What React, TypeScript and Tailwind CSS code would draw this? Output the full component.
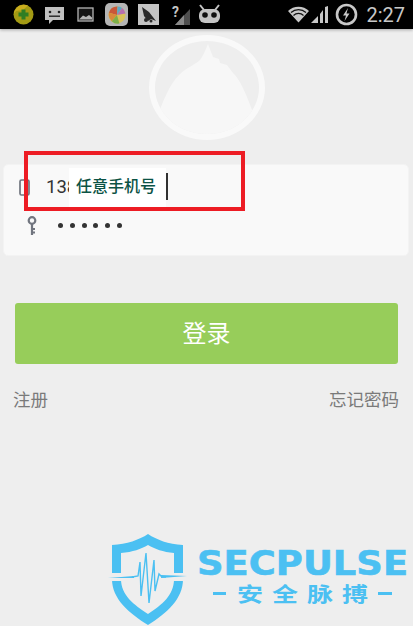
const CJK = "font-['Roboto','Noto_Sans_CJK_SC',sans-serif]";

function StatusBar() {
    return (
        <div className="relative z-10 h-[29px] bg-black flex items-center pl-[13px] pr-[8px] shrink-0 shadow-[0_1px_3px_rgba(0,0,0,0.3)]">
            {/* 360 ball */}
            <svg width="21" height="21" viewBox="0 0 21 21">
                <circle cx="10.500" cy="10.500" r="10" fill="#a39a14" />
                <path d="M1 10a10 10 0 0 1 14-8.500L10 6 3 7z" fill="#c9ad1e" />
                <path d="M8.500 5.500h4v3h3v4h-3v3h-4v-3h-3v-4h3z" fill="#2f7d23" />
            </svg>
            {/* message */}
            <svg width="21" height="22" viewBox="0 0 21 22" className="ml-[10px]">
                <path d="M1 3h19v13H9l-4 4v-4H1z" fill="#c0c0c0" />
                <circle cx="6" cy="8" r="1.300" fill="#222" />
                <circle cx="15" cy="8" r="1.300" fill="#222" />
                <path d="M5 11.500h11v1.400H5z" fill="#222" />
            </svg>
            {/* picture */}
            <svg width="17" height="15" viewBox="0 0 17 15" className="ml-[12px]">
                <rect x="1" y="1" width="15" height="13" fill="#151515" stroke="#b5b5b5" strokeWidth="1.300" />
                <path d="M2 12.500l4-4 3 1.500 3-2 3 2.500v2z" fill="#b5b5b5" />
            </svg>
            {/* ball app */}
            <div className="ml-[11px] w-[23px] h-[23px] rounded-[5px] bg-[#b5b5b5] flex items-center justify-center">
                <svg width="18" height="18" viewBox="0 0 19 19">
                    <circle cx="9.500" cy="9.500" r="9" fill="#d8c25a" />
                    <path d="M9.500 9.500L1 7a9 9 0 0 1 9-6.500z" fill="#c9573a" />
                    <path d="M9.500 9.500L10 .5a9 9 0 0 1 5 1.500z" fill="#5aa9c9" />
                    <path d="M9.500 9.500L15 2a9 9 0 0 1 3.500 6z" fill="#b66fb0" />
                    <path d="M9.500 9.500L1 7a9 9 0 0 0 3 9z" fill="#d88a3a" />
                    <path d="M9.500 9.500L4 16a9 9 0 0 0 8 2.500z" fill="#7db04a" />
                </svg>
            </div>
            {/* bird app */}
            <div className="ml-[10px] w-[21px] h-[21px] bg-[#c4c4c4] flex items-center justify-center">
                <svg width="19" height="19" viewBox="0 0 19 19">
                    <path d="M3 2l7 5 7 9-5-2-3 2-4-5z" fill="#2a2a2a" />
                    <circle cx="7" cy="15" r="2" fill="#2a2a2a" />
                    <circle cx="12" cy="16" r="1.500" fill="#2a2a2a" />
                </svg>
            </div>
            {/* no signal */}
            <div className="ml-[13px] relative w-[19px] h-[21px]">
                <svg width="19" height="17" viewBox="0 0 19 17" className="absolute left-0 bottom-0">
                    <path d="M18 1v16H3z" fill="#4f4f4f" />
                    <path d="M12 7v10H3z" fill="#8a8a8a" />
                </svg>
                <span className="absolute left-0 top-[-1px] text-[14px] leading-[18px] font-bold text-[#c4c4c4] font-['Roboto',sans-serif]">?</span>
            </div>
            {/* cyanogen mascot */}
            <svg width="23" height="22" viewBox="0 0 23 22" className="ml-[7px]">
                <path d="M2 1l4 5M21 1l-4 5" stroke="#c4c4c4" strokeWidth="2" />
                <rect x="1" y="5" width="21" height="14" rx="6" fill="#c4c4c4" />
                <circle cx="7" cy="11" r="2.800" fill="#111" />
                <circle cx="16" cy="11" r="2.800" fill="#111" />
            </svg>
            <div className="flex-1" />
            {/* wifi */}
            <svg width="21" height="17" viewBox="0 0 21 17">
                <path d="M10.500 16.500L0 5a15 15 0 0 1 21 0z" fill="#c8c8c8" />
                <path d="M3 6.500a11 11 0 0 1 15 0M5.500 9.500a7 7 0 0 1 10 0" stroke="#111" strokeWidth="1.200" fill="none" />
            </svg>
            {/* signal */}
            <svg width="20" height="19" viewBox="0 0 20 19">
                <path d="M19 1v17h-3V2z" fill="#c8c8c8" />
                <path d="M14 5v13h-3V9z" fill="#c8c8c8" />
                <path d="M9 11v7H2z" fill="#c8c8c8" />
            </svg>
            {/* charging battery */}
            <svg width="23" height="23" viewBox="0 0 23 23" className="ml-[6px]">
                <circle cx="11.500" cy="11.500" r="9.500" fill="none" stroke="#c8c8c8" strokeWidth="2.600" />
                <path d="M13 5l-5 7.500h3L9.500 18l5-7.500h-3z" fill="#c8c8c8" />
            </svg>
            <span className="ml-[8px] text-[#c8c8c8] text-[20px] leading-none font-['Roboto',sans-serif]">2:27</span>
        </div>
    );
}

function Avatar() {
    return (
        <div className="mt-[6px] mx-auto w-[116px] h-[105px] rounded-[50%] border-[6px] border-[#f9f9f9] overflow-hidden shrink-0">
            <svg width="104" height="93" viewBox="0 0 104 93">
                <path
                    d="M53 3l5 13 6 2 1 4 7 2 6 8c8 8 13 20 24 50v11H0V82C8 60 14 44 24 34c8-8 16-10 21-15 3-4 5-9 8-16z"
                    fill="#f7f7f7"
                />
            </svg>
        </div>
    );
}

function Card() {
    return (
        <div className="mt-[24px] ml-[3px] mr-[4px] h-[92px] bg-[#f9f9f9] rounded-[5px] border border-[#f3f3f3] flex flex-col pl-[15px] shrink-0">
            <div className="h-[45px] flex items-center">
                <svg width="11" height="17" viewBox="0 0 11 17" className="shrink-0">
                    <rect x="1" y="1" width="9" height="15" rx="1.500" fill="none" stroke="#71757f" strokeWidth="1.700" />
                </svg>
                <span className={`ml-[16px] text-[18.5px] text-[#333] ${CJK}`}>138</span>
            </div>
            <div className="h-[30px] flex items-center">
                <svg width="10" height="19" viewBox="0 0 10 19" className="ml-[8px] shrink-0">
                    <circle cx="5" cy="4.500" r="3.300" fill="none" stroke="#71757f" strokeWidth="2.200" />
                    <path d="M5 8v11M5 13h3M5 16.500h3" stroke="#71757f" strokeWidth="2.200" fill="none" />
                </svg>
                <div className="ml-[21px] flex gap-[6.8px]">
                    {[0, 1, 2, 3, 4, 5].map((i) => (
                        <span key={i} className="w-[5px] h-[5px] rounded-full bg-[#333]" />
                    ))}
                </div>
            </div>
        </div>
    );
}

function Watermark() {
    return (
        <div className="absolute left-[108px] top-[533px] flex items-start">
            <svg width="80" height="93" viewBox="0 0 80 93" className="shrink-0">
                <path d="M40 1c9 6 20 10 35 11v34c0 20-16 34-35 46C21 80 4 66 4 46V12c15-1 27-5 36-11z" fill="#4bc0f2" />
                <path d="M40 12c7 4 15 7 26 8v26c0 16-12 26-26 35-14-9-27-19-27-35V20c12-1 20-4 27-8z" fill="#eeeeee" />
                <rect x="0" y="40" width="80" height="8" fill="#eeeeee" />
                <path d="M0 45l26-2v2zM79 43l-26-1v3z" fill="#4bc0f2" />
                <path
                    d="M24 44l6-1 2-14 1 34 5-43 3 50 5-43 1 31 4-17 3 3 4 0"
                    fill="none"
                    stroke="#4bc0f2"
                    strokeWidth="1.400"
                />
            </svg>
            <div className="ml-[9px] mt-[13px] flex flex-col text-[#4bc0f2]">
                <span className="block origin-left scale-x-[1.085] text-[34px] leading-[34px] font-bold [-webkit-text-stroke:0.6px_#4bc0f2] font-['DejaVu_Sans',sans-serif] whitespace-nowrap">SECPULSE</span>
                <div className="flex items-center ml-[16px] h-[26px]">
                    <span className="w-[13px] h-[3px] bg-[#4bc0f2]" />
                    <span className="ml-[11px] scale-y-[0.8] text-[26px] leading-[26px] font-bold tracking-[9px] whitespace-nowrap font-['Noto_Sans_CJK_SC',sans-serif]">安全脉搏</span>
                    <span className="ml-[1px] w-[14px] h-[3px] bg-[#4bc0f2]" />
                </div>
            </div>
        </div>
    );
}

export default function App() {
    return (
        <div className={`relative w-[413px] h-[626px] bg-[#eeeeee] overflow-hidden flex flex-col ${CJK}`}>
            <StatusBar />
            <Avatar />
            <Card />

            <button className="mt-[47px] mx-[15px] h-[61px] rounded-[3px] bg-[#97cd5a] text-white text-[24px] flex items-center justify-center shrink-0">
                登录
            </button>

            <div className="mt-[24px] pl-[13px] pr-[14px] flex justify-between text-[17.5px] leading-[24px] text-[#7a7a7a]">
                <span>注册</span>
                <span>忘记密码</span>
            </div>

            {/* annotation on top of the screenshot */}
            <div className="absolute left-[69px] top-[168px] w-[97px] h-[40px] bg-white pl-[7px] pt-[8px] text-[16px] leading-[22px] font-medium text-[#0b5345]">
                任意手机号
            </div>
            <div className="absolute left-[166px] top-[173px] h-[27px] border-l-2 border-[#333]" />
            <div className="absolute left-[24px] top-[151px] w-[221px] h-[60px] border-[4px] border-[#ed1c24]" />

            <Watermark />
        </div>
    );
}
